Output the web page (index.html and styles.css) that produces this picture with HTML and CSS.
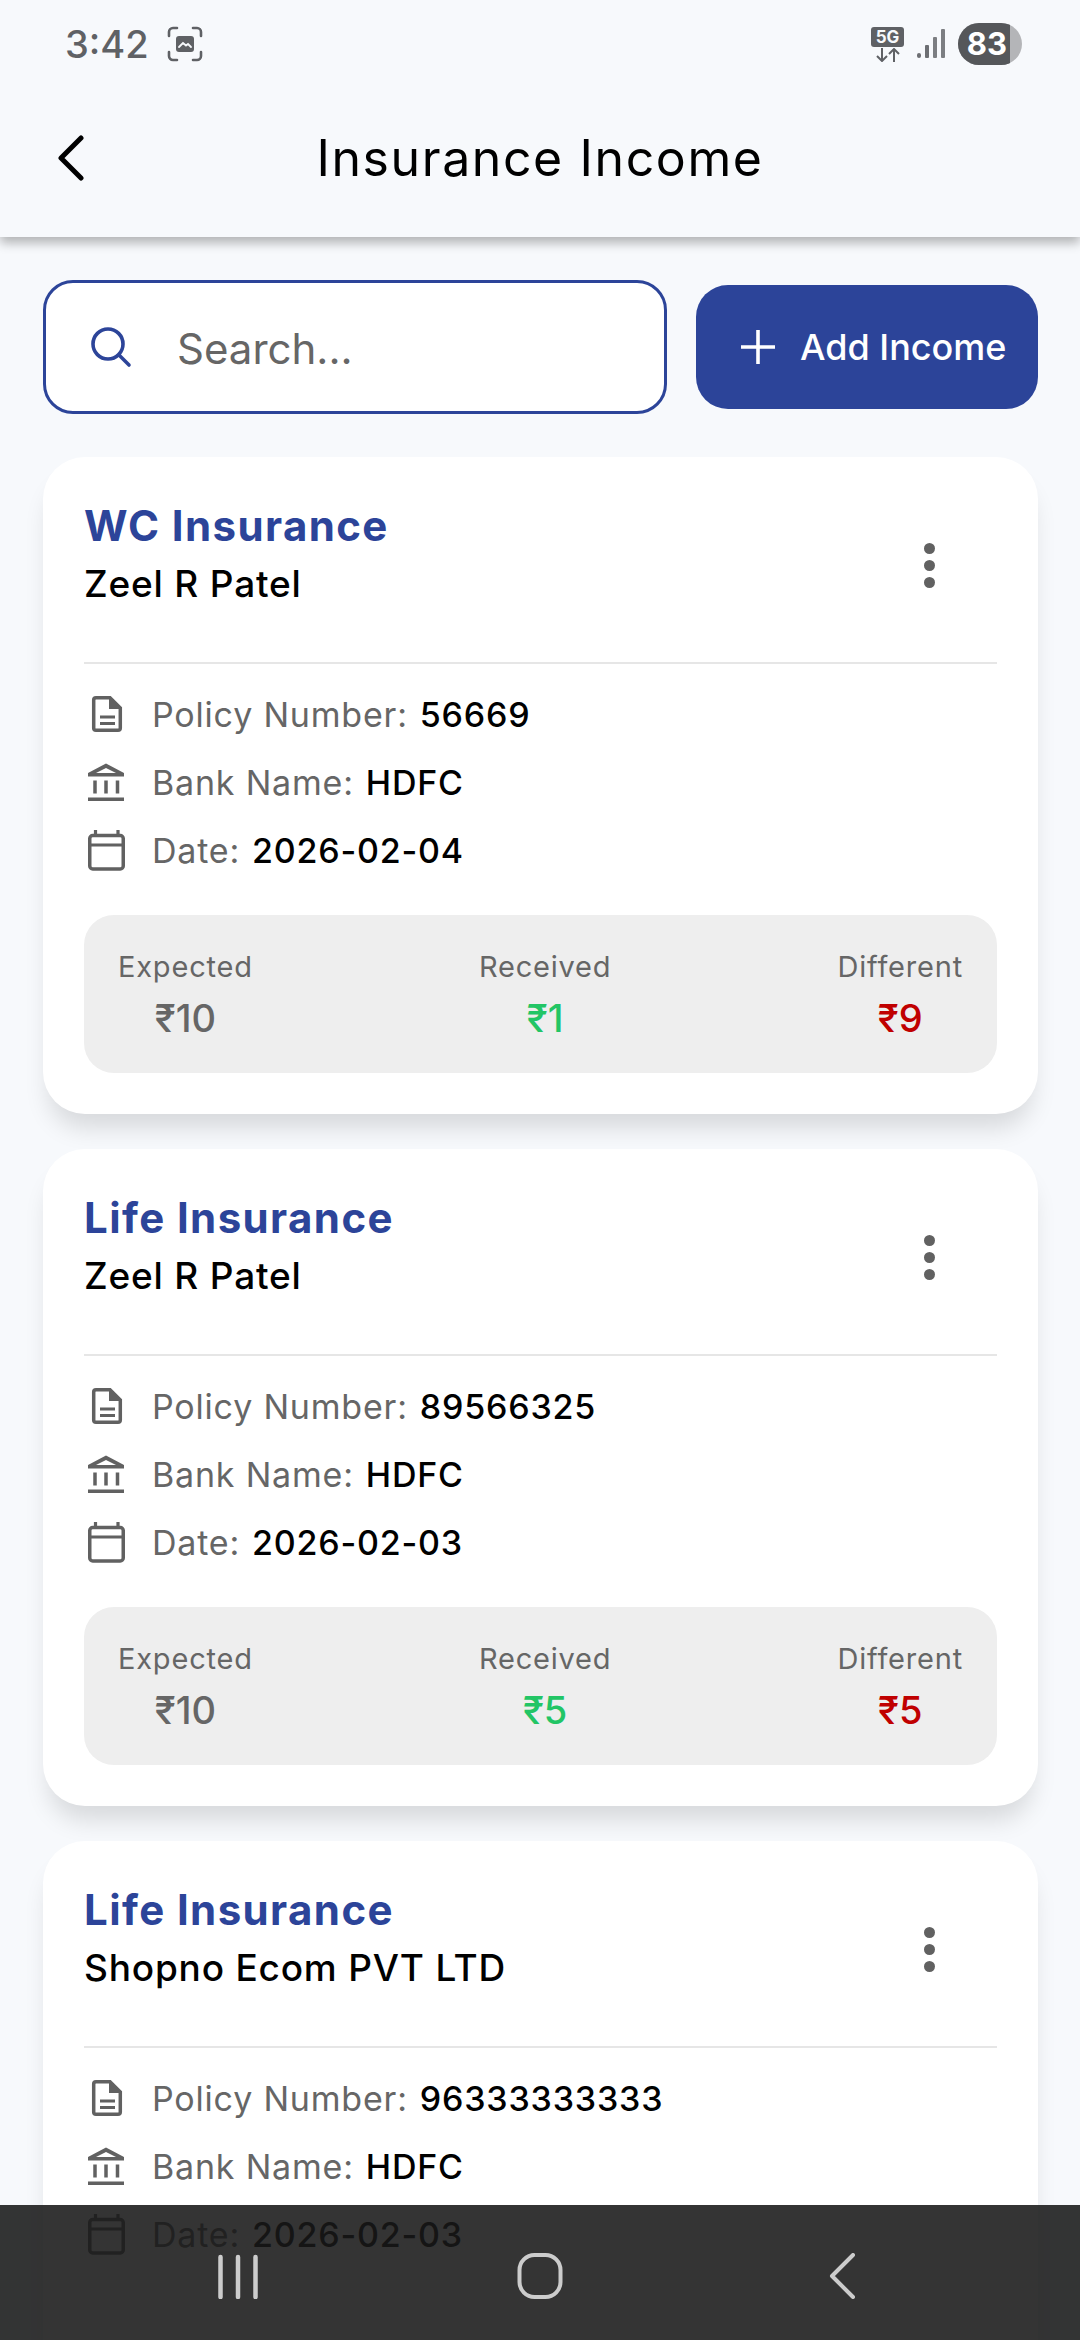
FILE: index.html
```html
<!DOCTYPE html>
<html lang="en">
<head>
  <meta charset="UTF-8">
  <meta name="viewport" content="width=device-width, initial-scale=1.0">
  <title>Insurance Income</title>
  <link rel="stylesheet" href="styles.css">
</head>
<body>
  <svg class="icon-defs" width="0" height="0">
    <symbol id="icon-doc" viewBox="0 0 40 44">
      <path d="M8 5.700h14l10.300 10.300V36a2.300 2.300 0 0 1-2.300 2.300H8A2.300 2.300 0 0 1 5.700 36V8A2.300 2.300 0 0 1 8 5.700z" fill="none" stroke="#616161" stroke-width="3.500"/>
      <path d="M21 5.700V17h11.300z" fill="#616161"/>
      <path d="M12 25h15M12 31.500h15" fill="none" stroke="#616161" stroke-width="3"/>
    </symbol>
    <symbol id="icon-bank" viewBox="0 0 40 44">
      <path d="M18 3.500L0 13v3.500h36V13zM18 8l10 5H8z" fill="#616161" fill-rule="evenodd"/>
      <path d="M7 20.500v13M18 20.500v13M29.500 20.500v13" fill="none" stroke="#616161" stroke-width="3.500"/>
      <path d="M0 39.200h36" fill="none" stroke="#616161" stroke-width="3.600"/>
    </symbol>
    <symbol id="icon-cal" viewBox="0 0 40 44">
      <rect x="1.750" y="7.500" width="33.500" height="33.500" rx="3" fill="none" stroke="#616161" stroke-width="3.500"/>
      <path d="M2 17h33M7.500 2v6M30 2v6" fill="none" stroke="#616161" stroke-width="3.200"/>
    </symbol>
  </svg>

  <header class="top">
    <div class="status-bar">
      <div class="status-left">
        <span class="time">3:42</span>
        <svg class="shot-icon" width="36" height="36" viewBox="0 0 36 36" fill="none" stroke="#5f6165" stroke-width="2.600" stroke-linecap="round">
          <path d="M2 10V6a4 4 0 0 1 4-4h4M26 2h4a4 4 0 0 1 4 4v4M34 26v4a4 4 0 0 1-4 4h-4M10 34H6a4 4 0 0 1-4-4v-4"/>
          <rect x="9" y="10" width="18" height="16" rx="3" fill="#5f6165" stroke="none"/>
          <path d="M12 21l4-4 3 2.500 2-1.500 3 3" stroke="#f7f9fc" stroke-width="1.800"/>
        </svg>
      </div>
      <div class="status-right">
        <div class="net">
          <span class="net-5g">5G</span>
          <svg width="26" height="14" viewBox="0 0 26 14" fill="none" stroke="#5f6165" stroke-width="2">
            <path d="M7 0v13M2 8l5 5 5-5M19 14V1M14 6l5-5 5 5"/>
          </svg>
        </div>
        <svg width="28" height="30" viewBox="0 0 28 30" fill="#6d6f73">
          <rect x="0" y="24" width="4" height="5" rx="2"/>
          <rect x="8" y="16" width="4" height="13" rx="1"/>
          <rect x="16" y="8" width="4" height="21" rx="1" fill="#7c7e82"/>
          <rect x="24" y="0" width="4" height="29" rx="1" fill="#7c7e82"/>
        </svg>
        <div class="battery"><span class="battery-level">83</span></div>
      </div>
    </div>
    <div class="app-bar">
      <svg class="back" width="28" height="46" viewBox="0 0 28 46" fill="none" stroke="#000" stroke-width="5" stroke-linecap="round" stroke-linejoin="round">
        <path d="M24 3L4 23l20 20"/>
      </svg>
      <h1>Insurance Income</h1>
    </div>
  </header>

  <main>
    <div class="toolbar">
      <div class="search">
        <svg width="42" height="42" viewBox="0 0 42 42" fill="none" stroke="#2c4499" stroke-width="3.600" stroke-linecap="round">
          <circle cx="18" cy="18" r="15"/>
          <path d="M29 29l10 10"/>
        </svg>
        <span class="placeholder">Search...</span>
      </div>
      <button class="add-btn">
        <svg width="34" height="34" viewBox="0 0 34 34" fill="none" stroke="#fff" stroke-width="3.600">
          <path d="M17 0v34M0 17h34"/>
        </svg>
        Add Income
      </button>
    </div>

    <section class="card">
      <div class="card-head">
        <div>
          <h2>WC Insurance</h2>
          <p class="client">Zeel R Patel</p>
        </div>
        <div class="kebab"><i></i><i></i><i></i></div>
      </div>
      <ul class="details">
        <li><svg><use href="#icon-doc"/></svg><span class="label">Policy Number:</span><span class="value">56669</span></li>
        <li><svg><use href="#icon-bank"/></svg><span class="label">Bank Name:</span><span class="value">HDFC</span></li>
        <li><svg><use href="#icon-cal"/></svg><span class="label">Date:</span><span class="value">2026-02-04</span></li>
      </ul>
      <div class="stats">
        <div class="stat"><span class="stat-label">Expected</span><span class="stat-value">₹10</span></div>
        <div class="stat"><span class="stat-label">Received</span><span class="stat-value green">₹1</span></div>
        <div class="stat"><span class="stat-label">Different</span><span class="stat-value red">₹9</span></div>
      </div>
    </section>

    <section class="card">
      <div class="card-head">
        <div>
          <h2>Life Insurance</h2>
          <p class="client">Zeel R Patel</p>
        </div>
        <div class="kebab"><i></i><i></i><i></i></div>
      </div>
      <ul class="details">
        <li><svg><use href="#icon-doc"/></svg><span class="label">Policy Number:</span><span class="value">89566325</span></li>
        <li><svg><use href="#icon-bank"/></svg><span class="label">Bank Name:</span><span class="value">HDFC</span></li>
        <li><svg><use href="#icon-cal"/></svg><span class="label">Date:</span><span class="value">2026-02-03</span></li>
      </ul>
      <div class="stats">
        <div class="stat"><span class="stat-label">Expected</span><span class="stat-value">₹10</span></div>
        <div class="stat"><span class="stat-label">Received</span><span class="stat-value green">₹5</span></div>
        <div class="stat"><span class="stat-label">Different</span><span class="stat-value red">₹5</span></div>
      </div>
    </section>

    <section class="card">
      <div class="card-head">
        <div>
          <h2>Life Insurance</h2>
          <p class="client">Shopno Ecom PVT LTD</p>
        </div>
        <div class="kebab"><i></i><i></i><i></i></div>
      </div>
      <ul class="details">
        <li><svg><use href="#icon-doc"/></svg><span class="label">Policy Number:</span><span class="value">96333333333</span></li>
        <li><svg><use href="#icon-bank"/></svg><span class="label">Bank Name:</span><span class="value">HDFC</span></li>
        <li><svg><use href="#icon-cal"/></svg><span class="label">Date:</span><span class="value">2026-02-03</span></li>
      </ul>
    </section>
  </main>

  <nav class="nav-bar">
    <svg width="40" height="46" viewBox="0 0 40 46" stroke="#cccccc" stroke-width="4.500" stroke-linecap="round"><path d="M2.500 4v40M20 4v40M37.500 4v40"/></svg>
    <svg width="46" height="46" viewBox="0 0 46 46" fill="none" stroke="#cccccc" stroke-width="4"><rect x="2.500" y="2" width="41" height="42" rx="15"/></svg>
    <svg width="28" height="46" viewBox="0 0 28 46" fill="none" stroke="#cccccc" stroke-width="4" stroke-linecap="round" stroke-linejoin="round"><path d="M25 2L4 23l21 21"/></svg>
  </nav>
</body>
</html>
```

FILE: styles.css
```css
* {
  box-sizing: border-box;
}
html, body {
  height: 2340px;
}
body {
  margin: 0;
  padding: 0;
  overflow: hidden;
  position: relative;
  font-family: Inter, "Liberation Sans", sans-serif;
  background-color: #f7f9fc;
  color: #000;
}
.icon-defs {
  position: absolute;
}

/* status bar + title */
.top {
  height: 237px;
  background-color: #f7f9fc;
  box-shadow: 0 6px 10px rgba(0, 0, 0, 0.28);
  position: relative;
}
.status-bar {
  height: 88px;
  padding: 0 58px 0 65px;
  display: flex;
  justify-content: space-between;
  align-items: center;
}
.status-left, .status-right {
  display: flex;
  align-items: center;
}
.status-left {
  gap: 18px;
}
.status-right {
  gap: 13px;
}
.time {
  font-size: 38px;
  font-weight: 500;
  color: #5f6165;
}
.net {
  display: flex;
  flex-direction: column;
  align-items: center;
  gap: 1px;
}
.net-5g {
  width: 33px;
  background-color: #5f6165;
  color: #f7f9fc;
  font-size: 17px;
  font-weight: 700;
  line-height: 20px;
  text-align: center;
  border-radius: 3px;
}
.battery {
  width: 64px;
  height: 42px;
  border-radius: 21px;
  background-color: #b4b5b8;
  overflow: hidden;
}
.battery-level {
  display: block;
  width: 52px;
  height: 42px;
  padding-right: 3px;
  background-color: #55575a;
  color: #fff;
  font-size: 31px;
  font-weight: 700;
  line-height: 42px;
  text-align: right;
}
.app-bar {
  height: 149px;
  padding: 0 0 10px 57px;
  display: flex;
  align-items: center;
}
.app-bar h1 {
  flex: 1;
  margin: 0 0 0 -85px;
  text-align: center;
  font-size: 50px;
  font-weight: 400;
  letter-spacing: 1.6px;
}

main {
  height: 2103px;
  overflow: hidden;
  padding: 43px 42px 0 43px;
}
.toolbar {
  display: flex;
  align-items: center;
  gap: 29px;
  margin-bottom: 43px;
}
.search {
  flex: 1;
  height: 134px;
  background-color: #fff;
  border: 3px solid #2c4499;
  border-radius: 30px;
  padding-left: 44px;
  display: flex;
  align-items: center;
  gap: 45px;
}
.placeholder {
  padding-top: 2px;
  font-size: 42px;
  color: #666;
}
.add-btn {
  width: 342px;
  height: 124px;
  padding: 0 0 0 45px;
  border: none;
  border-radius: 32px;
  background-color: #2c4499;
  color: #fff;
  font-family: inherit;
  font-size: 36px;
  font-weight: 500;
  display: flex;
  align-items: center;
  gap: 25px;
}

.card {
  height: 657px;
  margin-bottom: 35px;
  padding: 0 41px;
  background-color: #fff;
  border-radius: 42px;
  box-shadow: 0 20px 24px -6px rgba(0, 0, 0, 0.13);
}
.card-head {
  height: 207px;
  padding-top: 43px;
  border-bottom: 2px solid #e6e6e6;
  display: flex;
  justify-content: space-between;
}
.card-head h2 {
  margin: 0;
  font-size: 42px;
  font-weight: 700;
  line-height: 52px;
  letter-spacing: 1.4px;
  color: #2c4499;
}
.client {
  margin: 8px 0 0;
  font-size: 37px;
  font-weight: 500;
  line-height: 48px;
  letter-spacing: 0.8px;
}
.kebab {
  width: 12px;
  margin: 43px 61px 0 0;
  display: flex;
  flex-direction: column;
  gap: 6px;
}
.kebab i {
  width: 11px;
  height: 11px;
  border-radius: 50%;
  background-color: #616161;
}

ul.details {
  list-style-type: none;
  margin: 16px 0 0;
  padding: 0;
}
.details li {
  height: 68px;
  display: flex;
  align-items: center;
  font-size: 34px;
  letter-spacing: 0.8px;
  white-space: pre;
}
.details svg {
  width: 40px;
  height: 44px;
  margin: 0 24px 0 4px;
  flex: none;
}
.label {
  color: #666;
}
.value {
  font-weight: 500;
  margin-left: 12px;
}

.stats {
  height: 158px;
  margin-top: 31px;
  padding: 32px 34px 0;
  background-color: #eee;
  border-radius: 30px;
  display: flex;
  justify-content: space-between;
}
.stat {
  display: flex;
  flex-direction: column;
  align-items: center;
  gap: 8px;
}
.stat-label {
  font-size: 29px;
  line-height: 40px;
  letter-spacing: 0.8px;
  color: #666;
}
.stat-value {
  font-size: 38px;
  font-weight: 500;
  line-height: 46px;
  color: #666;
}
.green {
  color: #22c565;
}
.red {
  color: #c00000;
}

/* sits over the page, content shows through a bit */
.nav-bar {
  position: absolute;
  left: 0;
  right: 0;
  bottom: 0;
  height: 135px;
  padding-top: 7px;
  background-color: rgba(24, 24, 24, 0.88);
  display: grid;
  grid-template-columns: repeat(3, 302px);
  justify-content: center;
  justify-items: center;
  align-items: center;
}
```
